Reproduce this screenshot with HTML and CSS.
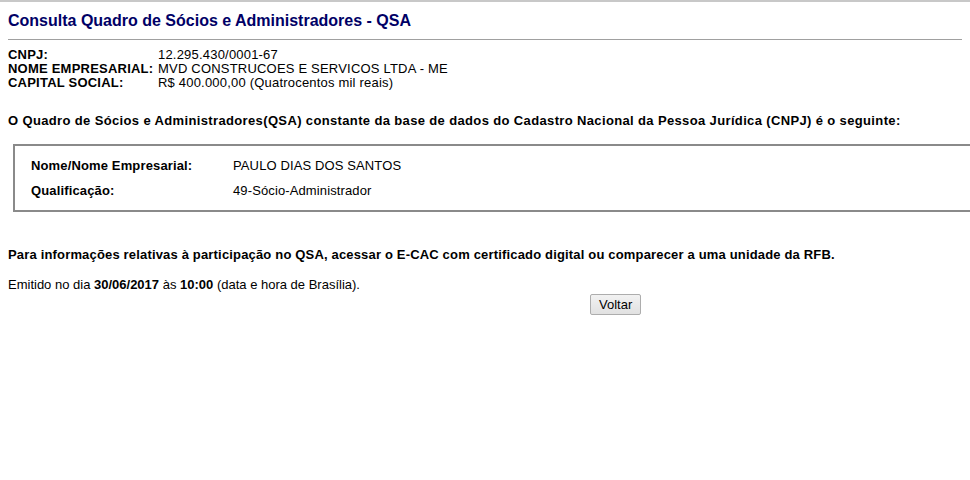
FILE: index.html
```html
<!DOCTYPE html>
<html lang="pt-BR">
<head>
<meta charset="utf-8">
<title>Consulta QSA</title>
<link rel="stylesheet" href="styles.css">
</head>
<body>
<div class="topline"></div>
<h1 class="title">Consulta Quadro de Sócios e Administradores - QSA</h1>
<hr class="rule">
<table class="info">
  <tr><th>CNPJ:</th><td>12.295.430/0001-67</td></tr>
  <tr><th>NOME EMPRESARIAL:</th><td>MVD CONSTRUCOES E SERVICOS LTDA - ME</td></tr>
  <tr><th>CAPITAL SOCIAL:</th><td>R$ 400.000,00 (Quatrocentos mil reais)</td></tr>
</table>
<p class="lead">O Quadro de Sócios e Administradores(QSA) constante da base de dados do Cadastro Nacional da Pessoa Jurídica (CNPJ) é o seguinte:</p>
<div class="box">
  <div class="row"><span class="lbl">Nome/Nome Empresarial:</span><span class="val">PAULO DIAS DOS SANTOS</span></div>
  <div class="row"><span class="lbl">Qualificação:</span><span class="val">49-Sócio-Administrador</span></div>
</div>
<p class="note">Para informações relativas à participação no QSA, acessar o E-CAC com certificado digital ou comparecer a uma unidade da RFB.</p>
<p class="emit">Emitido no dia <b>30/06/2017</b> às <b>10:00</b> (data e hora de Brasília).</p>
<div class="actions"><button class="btn" type="button">Voltar</button></div>
</body>
</html>
```
FILE: styles.css
```css
html { overflow-x: hidden; }
body {
  margin: 0;
  font-family: Arial, "Liberation Sans", sans-serif;
  font-size: 13px;
  color: #000;
  background: #fff;
}
.topline { height: 2px; background: #c8c8c8; }
.title {
  margin: 0;
  padding: 9px 8px 0;
  font-size: 16px;
  line-height: 19px;
  font-weight: bold;
  color: #000066;
}
.rule {
  margin: 9px 8px 0;
  border: 0;
  border-top: 1px solid #a0a0a0;
  height: 0;
}
.info {
  margin: 8px 0 0 8px;
  border-collapse: collapse;
}
.info th, .info td {
  padding: 0;
  font-size: 13px;
  line-height: 14px;
  text-align: left;
  vertical-align: top;
}
.info th { font-weight: bold; padding-right: 3px; width: 147px; letter-spacing: 0.22px; }
.info td { letter-spacing: 0.2px; }
.lead {
  margin: 23px 8px 0;
  font-weight: bold;
  line-height: 16px;
  letter-spacing: 0.36px;
}
.box {
  margin: 15px -20px 0 13px;
  border: 2px solid #8a8a8a;
  padding: 7px 0 7px 16px;
}
.row { display: flex; line-height: 25px; }
.lbl { width: 202px; font-weight: bold; letter-spacing: 0.14px; }
.val { letter-spacing: 0.12px; }
.note {
  margin: 35px 8px 0;
  font-weight: bold;
  line-height: 16px;
  letter-spacing: 0.17px;
}
.emit {
  margin: 14px 8px 0;
  font-size: 13px;
  line-height: 16px;
}
.actions { padding-left: 590px; margin-top: 1px; }
.btn {
  font-family: Arial, "Liberation Sans", sans-serif;
  font-size: 13px;
  padding: 1px 8px;
  height: 21px;
  border: 1px solid #adadad;
  border-radius: 2px;
  background: linear-gradient(#f2f2f2, #e1e1e1);
  color: #000;
}
```
